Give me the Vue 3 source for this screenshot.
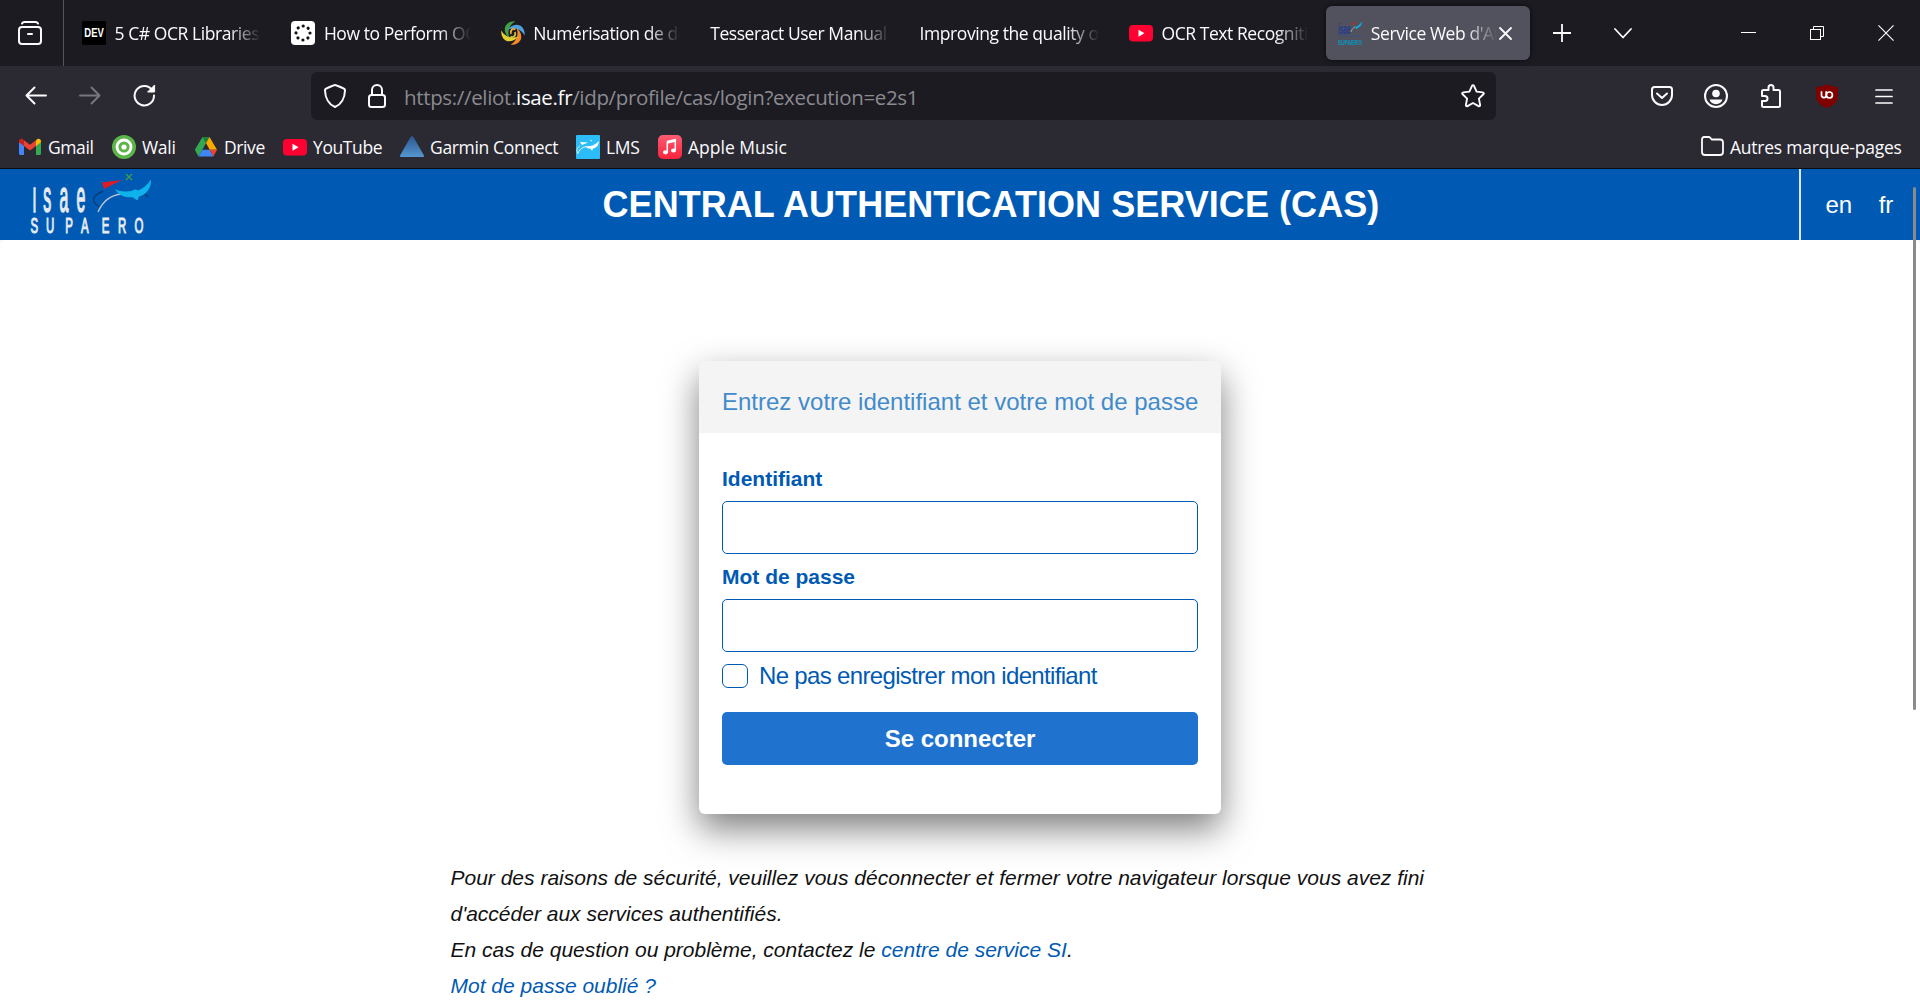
<script setup>
const tabs = [
  { title: '5 C# OCR Libraries for', icon: 'dev' },
  { title: 'How to Perform OCR', icon: 'dots' },
  { title: 'Numérisation de docu', icon: 'swirl' },
  { title: 'Tesseract User Manual', icon: null },
  { title: 'Improving the quality of', icon: null },
  { title: 'OCR Text Recognition', icon: 'youtube' },
  { title: "Service Web d'Auth", icon: 'isae', active: true },
]

const bookmarks = [
  { label: 'Gmail', icon: 'gmail', width: 46, tracking: -0.4 },
  { label: 'Wali', icon: 'wali', width: 34, tracking: -0.3 },
  { label: 'Drive', icon: 'drive', width: 41, tracking: -0.4 },
  { label: 'YouTube', icon: 'youtube', width: 69, tracking: -0.4 },
  { label: 'Garmin Connect', icon: 'garmin', width: 128, tracking: -0.34 },
  { label: 'LMS', icon: 'lms', width: 34, tracking: -0.3 },
  { label: 'Apple Music', icon: 'music', width: 101, tracking: 0 },
]
</script>

<template>
  <div class="window">
    <svg class="defs" width="0" height="0" aria-hidden="true">
      <defs>
        <symbol id="youtube" viewBox="0 0 24 24">
          <rect y="4" width="24" height="16.500" rx="4" fill="#ff0033" />
          <path d="M9.500 8.700v7l6-3.500z" fill="#fff" />
        </symbol>
        <symbol id="dev" viewBox="0 0 24 24">
          <rect width="24" height="24" rx="1.500" fill="#000" />
          <text x="2.300" y="16.300" font-family="Liberation Sans, sans-serif" font-size="12.500" font-weight="700" fill="#fff" textLength="19.500" lengthAdjust="spacingAndGlyphs">DEV</text>
        </symbol>
        <symbol id="dots" viewBox="0 0 24 24">
          <rect width="24" height="24" rx="4" fill="#fff" />
          <circle cx="12" cy="12" r="7" fill="none" stroke="#111" stroke-width="3.200" stroke-linecap="round" stroke-dasharray="0.010 5.488" />
        </symbol>
        <symbol id="swirl" viewBox="0 0 24 24">
          <path d="M14.500 .3C5 -.5 -1 8.500 8.500 17.500 6.500 12 7 4.500 14.500 .3z" fill="#3fa045" />
          <path d="M14.500 .3C5 -.5 -1 8.500 8.500 17.500 6.500 12 7 4.500 14.500 .3z" fill="#4aa3dc" transform="rotate(90 12 12)" />
          <path d="M14.500 .3C5 -.5 -1 8.500 8.500 17.500 6.500 12 7 4.500 14.500 .3z" fill="#f58a2b" transform="rotate(180 12 12)" />
          <path d="M14.500 .3C5 -.5 -1 8.500 8.500 17.500 6.500 12 7 4.500 14.500 .3z" fill="#e3d02f" transform="rotate(270 12 12)" />
          <path d="M14.500 8.300C11.500 7 8.800 9.200 10 13" fill="none" stroke="#f5a742" stroke-width="1.800" />
          <path d="M9.500 15.700C12.500 17 15.200 14.800 14 11" fill="none" stroke="#c9c23a" stroke-width="1.800" />
        </symbol>
        <symbol id="isae" viewBox="0 0 24 24">
          <text x="0" y="13" font-family="Liberation Sans, sans-serif" font-size="14" font-weight="700" fill="#213a8f" textLength="12.500" lengthAdjust="spacingAndGlyphs">isae</text>
          <path d="M0 15h24" stroke="#35508f" stroke-width=".8" />
          <text x="0" y="23.800" font-family="Liberation Sans, sans-serif" font-size="8" font-weight="700" fill="#0795bd" textLength="24" lengthAdjust="spacingAndGlyphs">SUPAERO</text>
          <path d="M14 2.500l4-1.200-2.500 3z" fill="#e02020" />
          <path d="M16 5.500c2 1 5-.5 8-5-.3 3.500-2 6-4.500 6l-.5 2-1.500-1.800z" fill="#08b4e8" />
          <path d="M13 11c.5-2.500 2-4 4-5" stroke="#bbb" stroke-width=".8" fill="none" />
        </symbol>
        <symbol id="gmail" viewBox="0 0 24 24">
          <path d="M1 7v11.500c0 .8.600 1.500 1.500 1.500H6V10z" fill="#4285f4" />
          <path d="M23 7v11.500c0 .8-.6 1.500-1.500 1.500H18V10z" fill="#34a853" />
          <path d="M18 5.500V11l5-3.700V6.200c0-2-2.300-3.100-3.900-1.900z" fill="#fbbc04" />
          <path d="M6 11V5.300l6 4.500 6-4.500V11l-6 4.500z" fill="#ea4335" />
          <path d="M1 6.200v1.100L6 11V5.300L4.900 4.300C3.300 3.100 1 4.200 1 6.200z" fill="#c5221f" />
        </symbol>
        <symbol id="wali" viewBox="0 0 24 24">
          <circle cx="12" cy="12" r="12" fill="#5cb548" />
          <circle cx="12" cy="12" r="7" fill="none" stroke="#fff" stroke-width="2.800" />
          <circle cx="12" cy="12" r="2.600" fill="#fff" />
        </symbol>
        <symbol id="drive" viewBox="0 0 24 24">
          <path d="M8.500 2h7L12 8z" fill="#188038" />
          <path d="M8.500 2L12 8 8.300 14.800 4.500 21.500.8 14.800z" fill="#34a853" />
          <path d="M15.500 2L23 14.800h-7.300L12 8z" fill="#fbab00" />
          <path d="M8.300 14.800h7.400L19.500 21.500h-15z" fill="#4285f4" />
          <path d="M23 14.800h-7.300l3.800 6.700z" fill="#ea4335" />
        </symbol>
        <symbol id="garmin" viewBox="0 0 24 24">
          <linearGradient id="gg" x1="0" y1="0" x2="0" y2="1">
            <stop offset="0" stop-color="#2c5690" /><stop offset="1" stop-color="#5597cf" />
          </linearGradient>
          <path d="M12 1.200c.7 0 1.200.4 1.600 1L24 20.500c0 1-.5 1.500-1.200 1.500H1.200C.5 22 0 21.500 0 20.500L10.400 2.200c.4-.6.900-1 1.600-1z" fill="url(#gg)" />
        </symbol>
        <symbol id="lms" viewBox="0 0 24 24">
          <rect width="24" height="24" rx="1" fill="#2cbdf8" />
          <path d="M4 7l8 .5-6 2.500z" fill="#fff" />
          <path d="M9 11c4 1 9 0 14-5-.5 5-3 7-6 7.500l-.8 2.300-2-2.300c-2 0-4-.5-5.200-2.500z" fill="#fff" />
          <path d="M1.500 19c1.500-4 4-6.500 8.500-7.500M1.500 18C0 15 1.500 12 4 11M14 5l2 1" stroke="#e6f7ff" stroke-width=".9" fill="none" />
        </symbol>
        <symbol id="music" viewBox="0 0 24 24">
          <linearGradient id="mg" x1="0" y1="0" x2="0" y2="1">
            <stop offset="0" stop-color="#fb5c74" /><stop offset="1" stop-color="#fa233b" />
          </linearGradient>
          <rect width="24" height="24" rx="5" fill="url(#mg)" />
          <path d="M9.300 17V7l8-1.700v9.700" stroke="#fff" stroke-width="1.500" fill="none" />
          <path d="M9 5.700l8.800-1.900v3L9 8.700z" fill="#fff" />
          <ellipse cx="7.500" cy="17.300" rx="2.500" ry="2.100" fill="#fff" />
          <ellipse cx="15.500" cy="15.500" rx="2.500" ry="2.100" fill="#fff" />
        </symbol>
      </defs>
    </svg>

    <header class="tabbar">
      <div class="recent">
        <svg width="24" height="24" viewBox="0 0 24 24" fill="none" stroke="#fbfbfe" stroke-width="2" stroke-linecap="round">
          <path d="M4 2.500C4.500 1.500 5.200 1 6.500 1h11c1.300 0 2 .5 2.500 1.500" />
          <rect x="1" y="6" width="22" height="17" rx="3" />
          <path d="M10 13h4" />
        </svg>
      </div>
      <div class="tabs">
        <div v-for="t in tabs" :key="t.title" class="tab" :class="{ active: t.active }">
          <svg v-if="t.icon" class="fav" width="24" height="24"><use :href="'#' + t.icon" /></svg>
          <span class="title">{{ t.title }}</span>
          <svg v-if="t.active" class="close" width="13" height="13" viewBox="0 0 13 13" stroke="#fbfbfe" stroke-width="1.800" stroke-linecap="round"><path d="M1 1l11 11M12 1L1 12" /></svg>
        </div>
      </div>
      <svg class="plus" width="18" height="18" viewBox="0 0 18 18" stroke="#fbfbfe" stroke-width="1.800"><path d="M9 0v18M0 9h18" /></svg>
      <svg class="chev" width="18" height="11" viewBox="0 0 18 11" fill="none" stroke="#fbfbfe" stroke-width="1.800" stroke-linecap="round" stroke-linejoin="round"><path d="M1 1l8 8.500L17 1" /></svg>
      <div class="controls">
        <svg class="min" width="15" height="16" viewBox="0 0 15 16" stroke="#fff"><path d="M0 7.500h15" /></svg>
        <svg class="restore" width="15" height="16" viewBox="0 0 15 16" fill="none" stroke="#fff"><rect x=".5" y="4.500" width="10" height="10" /><path d="M3.500 4.500v-3h10v10h-3" /></svg>
        <svg width="16" height="16" viewBox="0 0 17 17" stroke="#fff" stroke-width="1.200"><path d="M.5.500l16 16M16.500.500l-16 16" /></svg>
      </div>
    </header>

    <nav class="toolbar">
      <div class="navbtns">
        <svg width="22" height="19" viewBox="0 0 22 19" fill="none" stroke="#fbfbfe" stroke-width="2" stroke-linecap="round" stroke-linejoin="round"><path d="M21 9.500H1.500M9.500 1.500l-8 8 8 8" /></svg>
        <svg width="22" height="19" viewBox="0 0 22 19" fill="none" stroke="#77767d" stroke-width="2" stroke-linecap="round" stroke-linejoin="round"><path d="M1 9.500h19.500M12.500 1.500l8 8-8 8" /></svg>
        <svg width="23" height="23" viewBox="0 0 23 23"><path d="M19.300 6.200A9.700 9.700 0 1 0 21 11.500" fill="none" stroke="#fbfbfe" stroke-width="2" stroke-linecap="round" /><path d="M21.600 1v7h-7z" fill="#fbfbfe" stroke="#fbfbfe" stroke-linejoin="round" /></svg>
      </div>
      <div class="urlbar">
        <svg width="22" height="24" viewBox="0 0 22 24" fill="none" stroke="#fbfbfe" stroke-width="2" stroke-linejoin="round"><path d="M11 1c1 0 8.500 3.300 9.300 3.900.5.400.7 1 .7 1.600C20.800 14 17 20.500 11 23 5 20.500 1.200 14 1 6.500c0-.6.200-1.200.7-1.600C2.500 4.300 10 1 11 1z" /></svg>
        <svg class="lock" width="18" height="24" viewBox="0 0 18 24" fill="none" stroke="#fbfbfe" stroke-width="2"><rect x="1" y="11" width="16" height="12" rx="2.500" /><path d="M4 11V6a5 5 0 0 1 10 0v5" /></svg>
        <span class="url">https://eliot.<b>isae.fr</b>/idp/profile/cas/login?execution=e2s1</span>
        <svg class="star" width="24" height="24" viewBox="0 0 24 24" fill="none" stroke="#fbfbfe" stroke-width="1.900" stroke-linejoin="round"><path d="M11 1.900c.4-.9 1.600-.9 2 0l2.600 5.700 6.200.8c1 .1 1.300 1.200.6 1.900l-4.500 4.300 1.200 6.300c.2 1-.8 1.700-1.600 1.200L12 19l-5.500 3.100c-.8.500-1.800-.2-1.600-1.200l1.200-6.300-4.500-4.300c-.7-.7-.4-1.800.6-1.900l6.200-.8z" /></svg>
      </div>
      <div class="actions">
        <svg class="pocket" width="22" height="20" viewBox="0 0 22 20" fill="none" stroke="#fbfbfe" stroke-width="2" stroke-linecap="round" stroke-linejoin="round"><path d="M3.500 1h15C20 1 21 2 21 3.500V9c0 5.500-4.500 10-10 10S1 14.500 1 9V3.500C1 2 2 1 3.500 1z" /><path d="M6 7.500l5 4.500 5-4.500" /></svg>
        <svg class="account" width="24" height="24" viewBox="0 0 24 24"><circle cx="12" cy="12" r="11" fill="none" stroke="#fbfbfe" stroke-width="2" /><circle cx="12" cy="9.500" r="3.800" fill="#fbfbfe" /><path d="M5.500 15.500h13c-.8 2.800-3.500 4.700-6.500 4.700s-5.700-1.900-6.500-4.700z" fill="#fbfbfe" /></svg>
        <svg class="puzzle" width="20" height="24" viewBox="0 0 20 24" fill="none" stroke="#fbfbfe" stroke-width="2" stroke-linejoin="round"><path d="M1 12V7.500C1 6.500 1.500 6 2.500 6h5V3.500a2.500 2.500 0 0 1 5 0V6h5C18.500 6 19 6.500 19 7.500v14c0 1-.5 1.500-1.500 1.500h-15C1.500 23 1 22.500 1 21.500V17h3a2.500 2.500 0 0 0 0-5z" /></svg>
        <svg class="shield" width="22" height="24" viewBox="0 0 22 24"><path d="M11 0C14.500 2.300 18 3 22 3V12C22 18 17 21.500 11 24C5 21.500 0 18 0 12V3C4 3 7.500 2.300 11 0Z" fill="#800000" /><path d="M5.500 7.200V11.200A2.350 2.350 0 0 0 10.200 11.200V7.200" fill="none" stroke="#fff" stroke-width="1.700" /><circle cx="13.400" cy="11" r="3" fill="none" stroke="#fff" stroke-width="1.700" /></svg>
        <svg width="18" height="15" viewBox="0 0 18 15" stroke="#fbfbfe" stroke-width="1.700" stroke-linecap="round"><path d="M1 1h16M1 7.500h16M1 14h16" /></svg>
      </div>
    </nav>

    <nav class="bookmarks">
      <a v-for="b in bookmarks" :key="b.label" class="bm">
        <svg width="24" height="24"><use :href="'#' + b.icon" /></svg>
        <span :style="{ width: b.width + 'px', letterSpacing: b.tracking + 'px' }">{{ b.label }}</span>
      </a>
      <a class="bm other">
        <svg width="24" height="24" viewBox="0 0 24 24" fill="none" stroke="#fbfbfe" stroke-width="1.800" stroke-linejoin="round"><path d="M4 2h4.500c1 0 1.500.4 2 1l1.200 1.500H20c1.700 0 3 1.300 3 3V17c0 1.700-1.300 3-3 3H5c-1.700 0-3-1.300-3-3V4.500C2 3 2.700 2 4 2z" /></svg>
        <span class="other-label">Autres marque-pages</span>
      </a>
    </nav>

    <section class="banner">
      <svg class="logo" width="124" height="63" viewBox="0 0 124 63">
        <g fill="none" stroke-width="1.400">
          <path d="M73 22c-9 4-14 9-4 16" stroke="#0a3d7a" />
          <path d="M68 43c4-9 11-17 24-18" stroke="#b9c3cf" />
          <path d="M108 24c6 0 9 2 10 4" stroke="#0a3d7a" />
          <path d="M96 5l6 6M102 5l-6 6" stroke="#3f9b4a" />
        </g>
        <path d="M72 13.500l20-2.500-18 9z" fill="#dc1c26" />
        <path d="M85 20c5 3 11 2.500 17 2 2-2 4-2 6-.5 5-2 9-5 13-11 .5 8-4 15-12 17l-1.500 4-5.500-3.500c-7 1-14-2-17-8z" fill="#0db3ea" />
        <g font-family="Liberation Sans, sans-serif" fill="#e6ebf0" stroke="#e6ebf0">
          <text font-size="44" stroke-width="1.600" transform="translate(0 43) scale(.36 1)" x="6 37 82 129">ısae</text>
          <text font-size="22" stroke-width="1.100" transform="translate(0 64) scale(.52 1)" x="1 31 68 98 138 169 201">SUPAERO</text>
        </g>
      </svg>
      <h1>CENTRAL AUTHENTICATION SERVICE (CAS)</h1>
      <div class="langs"><a>en</a><a>fr</a></div>
    </section>

    <main class="page">
      <form class="card" @submit.prevent>
        <h2>Entrez votre identifiant et votre mot de passe</h2>
        <div class="fields">
          <label class="lbl" for="user">Identifiant</label>
          <input id="user" class="inp" type="text" />
          <label class="lbl" for="pass">Mot de passe</label>
          <input id="pass" class="inp" type="password" />
          <label class="check"><span class="box"></span><span>Ne pas enregistrer mon identifiant</span></label>
          <button class="submit">Se connecter</button>
        </div>
      </form>
      <div class="notes">
        <p>Pour des raisons de sécurité, veuillez vous déconnecter et fermer votre navigateur lorsque vous avez fini</p>
        <p>d'accéder aux services authentifiés.</p>
        <p>En cas de question ou problème, contactez le <a>centre de service SI</a>.</p>
        <p><a>Mot de passe oublié ?</a></p>
      </div>
    </main>
    <div class="scroll"></div>
  </div>
</template>

<style>
body { margin: 0; overflow: hidden; }
</style>

<style scoped>
.window { position: relative; width: 1920px; height: 1008px; overflow: hidden; display: flex; flex-direction: column; background: #f8f8f9; font-family: "Liberation Sans", Arial, sans-serif; box-sizing: border-box; }
.window * { box-sizing: border-box; }
.defs { position: absolute; }
svg { flex: none; display: block; }
.tabbar, .toolbar, .bookmarks { flex: none; display: flex; align-items: center; font-family: "Open Sans", "Noto Sans", sans-serif; color: #fbfbfe; white-space: nowrap; }
.tabbar { height: 66px; background: #1c1b22; }
.recent { width: 64px; height: 66px; padding: 21px 0 0 18px; border-right: 1px solid #55545c; }
.tabs { display: flex; gap: 6px; padding-left: 6px; }
.tab { width: 203.4px; height: 54px; padding: 0 12px; display: flex; align-items: center; border-radius: 6px; }
.tab.active { background: #52525e; box-shadow: 0 0 5px rgba(0, 0, 0, .7); }
.fav { margin-right: 8.5px; }
.title { flex: 1; min-width: 0; overflow: hidden; font-size: 17.5px; line-height: 26px; letter-spacing: -.43px; mask-image: linear-gradient(to left, transparent, #000 32px); }
.close { margin: 0 6px 0 2px; }
.plus { margin-left: 23.5px; }
.chev { margin-left: 43px; }
.controls { margin-left: auto; padding-right: 26px; display: flex; align-items: center; }
.min { margin-right: 54px; }
.restore { margin-right: 53px; }
.toolbar { height: 60px; background: #2b2a33; }
.navbtns { width: 311px; padding: 0 0 1px 25px; display: flex; align-items: center; gap: 32px; }
.urlbar { width: 1185px; height: 48px; border-radius: 6px; background: #1c1b22; display: flex; align-items: center; padding: 0 11px 0 13px; }
.lock { margin: 0 18px 0 22px; }
.url { flex: 1; padding-top: 2px; font-size: 20.5px; line-height: 46px; letter-spacing: -.34px; color: #8b8a90; }
.url b { font-weight: 400; color: #fbfbfe; }
.actions { margin-left: auto; padding-right: 27px; display: flex; align-items: center; }
.pocket { margin-right: 31px; }
.account { margin-right: 33px; }
.puzzle { margin-right: 35px; }
.shield { margin-right: 37px; }
.bookmarks { height: 43px; padding: 0 18px; gap: 18px; background: #2b2a33; border-bottom: 1px solid #0c0c0d; }
.bm { display: flex; align-items: center; gap: 6px; font-size: 17.5px; line-height: 26px; }
.other { margin-left: auto; }
.other-label { width: 172px; letter-spacing: -.23px; }
.banner { flex: none; height: 71px; background: #005ab3; display: flex; align-items: center; color: #fff; }
.logo { margin-left: 30px; overflow: visible; margin-bottom: 8px; }
h1 { margin: 0 0 0 448.5px; font-size: 36px; line-height: 71px; letter-spacing: .06px; white-space: nowrap; }
.langs { margin-left: auto; width: 121px; height: 71px; border-left: 2px solid #dce8f4; padding-left: 24.4px; display: flex; gap: 26.6px; font-size: 24px; line-height: 72px; }
.page { flex: 1; background: #fff; border-radius: 6px 6px 0 0; display: flex; flex-direction: column; align-items: center; padding-top: 121px; }
.card { flex: none; width: 522px; height: 453px; background: #fff; border-radius: 6px; overflow: hidden; box-shadow: 0 15px 35px rgba(0, 0, 0, .5); }
h2 { margin: 0; height: 72px; padding: 5px 23px 0; background: #f4f4f4; color: #428bca; font-size: 24px; font-weight: 400; line-height: 72px; white-space: nowrap; }
.fields { padding: 29px 23px 0; display: flex; flex-direction: column; }
.lbl { height: 39px; line-height: 34px; font-size: 21px; font-weight: 700; color: #005ab3; }
.inp { height: 53px; border: 1px solid #005ab3; border-radius: 5px; background: #fff; margin: 0 0 6px; padding: 0; outline: 0; }
.check { display: flex; align-items: center; height: 36px; color: #005ab3; font-size: 24px; letter-spacing: -.66px; white-space: nowrap; }
.box { width: 26px; height: 24px; border: 1px solid #005ab3; border-radius: 6px; margin-right: 11px; }
.submit { margin-top: 18px; height: 53px; border: 0; border-radius: 5px; background: #1f73cf; color: #fff; font: 700 24px/53px "Liberation Sans", Arial, sans-serif; padding: 0; }
.notes { width: 1019px; margin-top: 46px; font-size: 21px; line-height: 36px; font-style: italic; color: #111; white-space: nowrap; }
.notes p { margin: 0; }
.notes a { color: #005ab3; }
.scroll { position: absolute; left: 1913px; top: 187px; width: 3px; height: 523px; border-radius: 2px; background: #8b8b8b; }
</style>
